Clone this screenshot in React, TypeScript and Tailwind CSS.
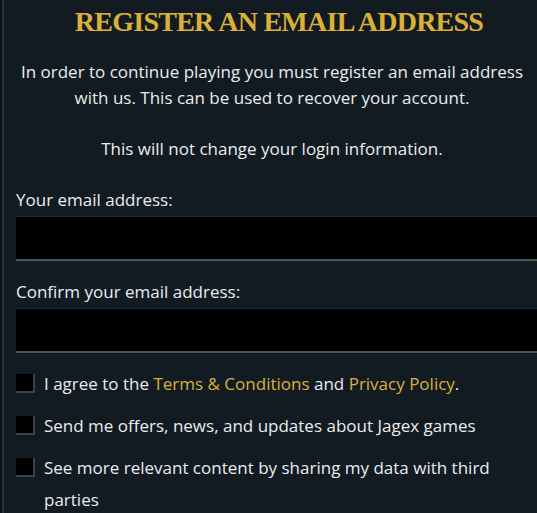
import React from "react";

const body = { fontFamily: "'Open Sans', Lato, sans-serif" };

const Field = ({ label }: { label: string }) => (
  <div className="flex flex-col">
    <label className="text-[17px] leading-[24px] text-[#e9edef]">{label}</label>
    <div className="mt-[4px] h-[45px] w-[540px] border-t border-[#1f2a31] border-b-2 border-b-[#4b5459] bg-black" />
  </div>
);

const Check = ({ children }: { children: React.ReactNode }) => (
  <div className="flex items-start gap-[9px]">
    <span className="mt-[6px] h-[19px] w-[19px] shrink-0 border-r-2 border-b-2 border-[#3a4248] bg-black" />
    <span className="text-[17px] leading-[32px] text-[#e9edef]">{children}</span>
  </div>
);

const App = () => {
  return (
    <div className="flex h-[513px] w-full overflow-hidden bg-[#131b22]" style={body}>
      <div className="w-[2px] shrink-0 bg-[#0c1216]" />
      <div className="w-[2px] shrink-0 bg-[#243239]" />
      <div className="flex flex-col pl-3">
        <div className="w-[512px]">
          <h1
            className="pl-[14px] pt-[5px] text-center text-[28px] font-bold uppercase leading-[34px] tracking-[-0.75px] text-[#dcb036]"
            style={{ fontFamily: "'Liberation Serif', serif" }}
          >
            Register an Email Address
          </h1>
          <p className="mt-[20px] text-center text-[17px] leading-[26px] text-[#e9edef]">
            In order to continue playing you must register an email address with us. This can be used to recover your account.
          </p>
          <p className="mt-[25px] text-center text-[17px] leading-[26px] text-[#e9edef]">
            This will not change your login information.
          </p>
        </div>
        <div className="mt-[26px] flex flex-col gap-[19px]">
          <Field label="Your email address:" />
          <Field label="Confirm your email address:" />
        </div>
        <div className="mt-[15px] flex flex-col gap-[10px]">
          <Check>
            I agree to the <span className="text-[#d9b13c]">Terms &amp; Conditions</span> and{" "}
            <span className="text-[#d9b13c]">Privacy Policy</span>.
          </Check>
          <Check>Send me offers, news, and updates about Jagex games</Check>
          <Check>
            See more relevant content by sharing my data with third
            <br />
            parties
          </Check>
        </div>
      </div>
    </div>
  );
};

export default App;
